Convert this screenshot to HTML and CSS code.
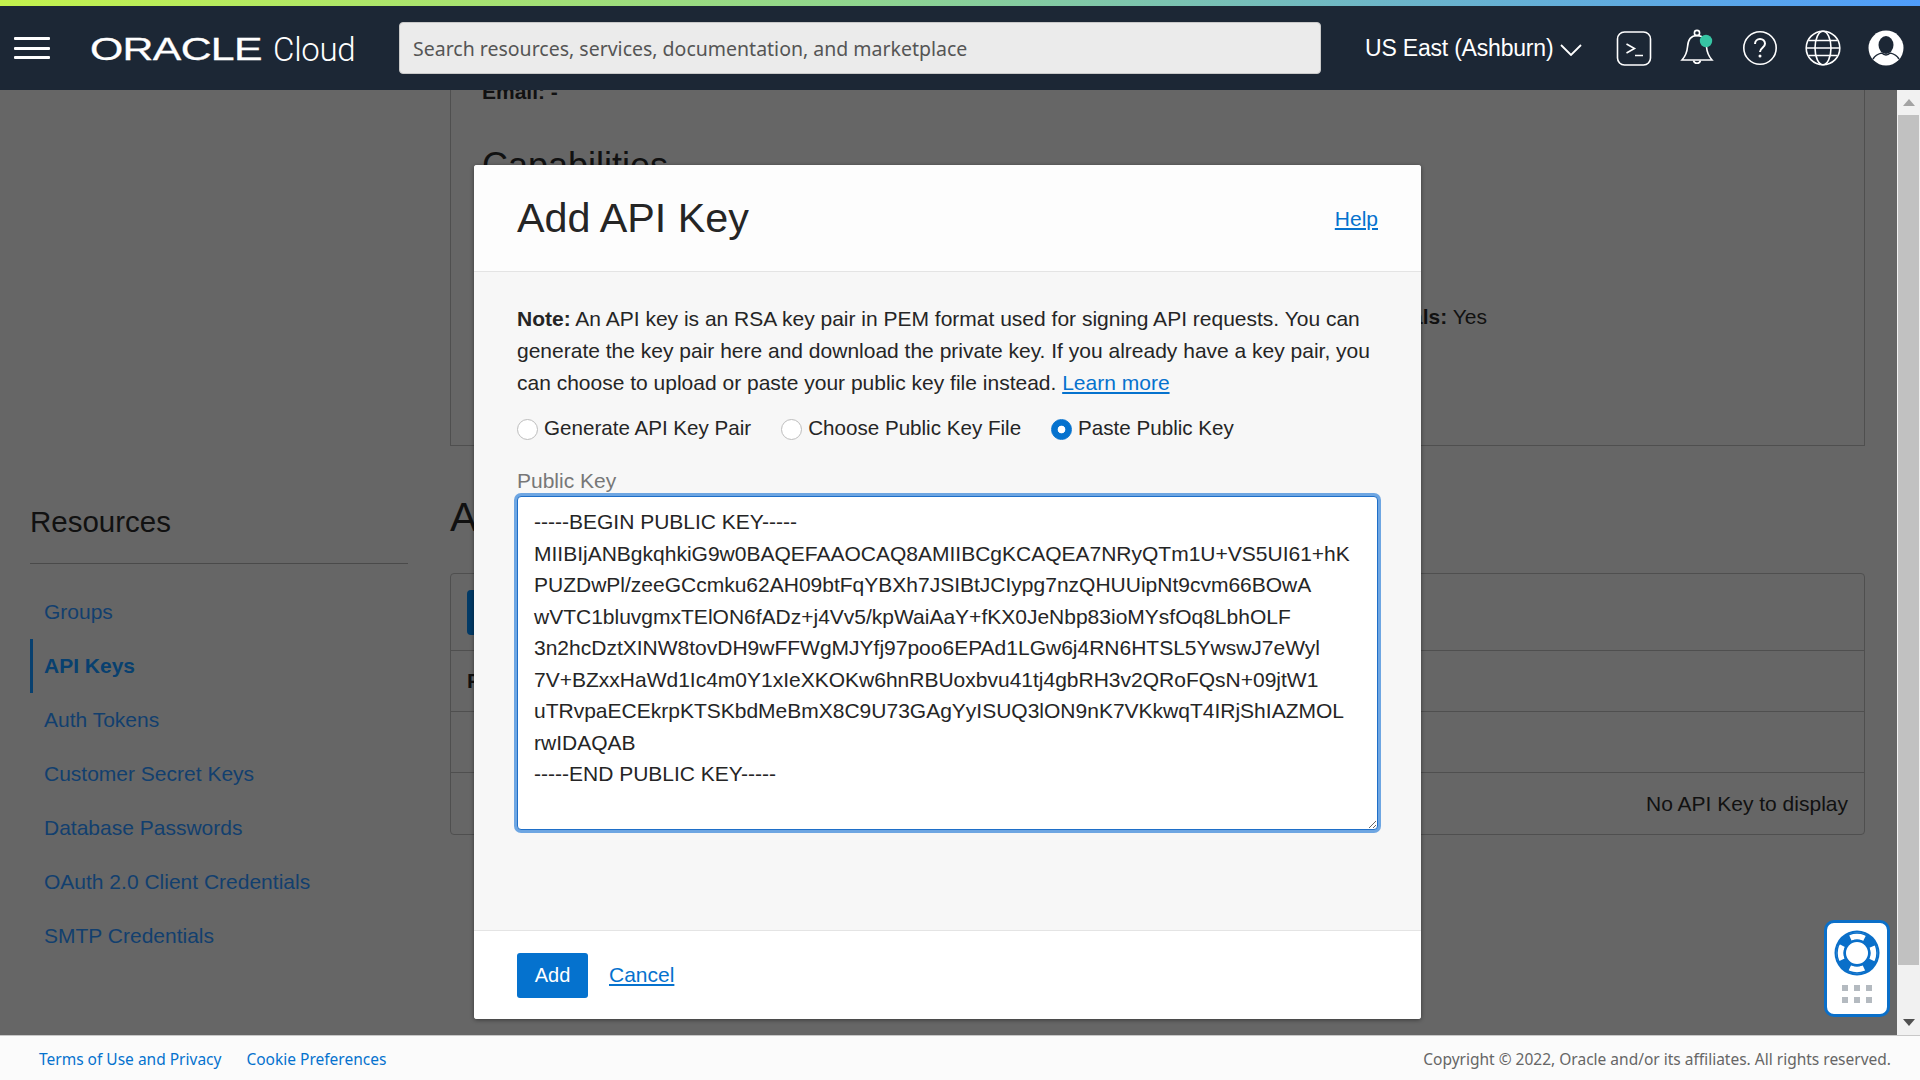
FILE: index.html
```html
<!DOCTYPE html>
<html lang="en">
<head>
<meta charset="utf-8">
<title>Add API Key</title>
<link rel="stylesheet" href="styles.css">
</head>
<body>
<div class="accent"></div>
<header class="header">
  <button class="burger" aria-label="Menu"><span></span><span></span><span></span></button>
  <div class="brand"><span class="oracle">ORACLE</span><span class="cloud">Cloud</span></div>
  <div class="search">Search resources, services, documentation, and marketplace</div>
  <div class="region">US East (Ashburn)
    <svg class="chev" width="22" height="12" viewBox="0 0 22 12"><path d="M1 1l10 10L21 1" fill="none" stroke="#fff" stroke-width="1.8"/></svg>
  </div>
  <div class="icons">
    <svg width="36" height="36" viewBox="0 0 36 36" fill="none" stroke="#fff" stroke-width="1.6"><rect x="1.5" y="2" width="33" height="33" rx="7"/><path d="M10.500 14l8 4.500-8 4.500M19 25.500h8"/></svg>
    <svg width="36" height="38" viewBox="0 0 36 38" fill="none" stroke="#fff" stroke-width="1.6"><circle cx="18" cy="4" r="2.6"/><path d="M3 31h30c-3.500-4-5-7-5.500-13C27 10 23 6.500 18 6.500S9 10 8.500 18C8 24 6.500 27 3 31z"/><path d="M14.500 31.500a3.600 3.600 0 0 0 7 0"/><circle cx="27" cy="12" r="6.200" fill="#36c5a4" stroke="none"/></svg>
    <svg width="36" height="36" viewBox="0 0 36 36" fill="none" stroke="#fff" stroke-width="1.6"><circle cx="18" cy="18" r="16.200"/><path d="M13 14c0-3 2.200-5 5-5s5 2 5 4.800c0 4-5 4-5 8.200" stroke-width="2"/><circle cx="18" cy="26" r="1.500" fill="#fff" stroke="none"/></svg>
    <svg width="36" height="36" viewBox="0 0 36 36" fill="none" stroke="#fff" stroke-width="1.6"><circle cx="18" cy="18" r="16.800"/><ellipse cx="18" cy="18" rx="8" ry="16.800"/><path d="M4 10.500h28M1.500 18h33M4 25.500h28"/></svg>
    <svg width="36" height="36" viewBox="0 0 36 36"><circle cx="18" cy="18" r="17.500" fill="#fff"/><ellipse cx="18" cy="15" rx="7.500" ry="9" fill="#1c2735"/><path d="M5 29c3-5 7-5.500 9-6M31 29c-3-5-7-5.500-9-6M14 23c2 2.500 6 2.500 8 0" fill="none" stroke="#1c2735" stroke-width="1.500"/></svg>
  </div>
</header>

<div class="workspace">
  <main class="viewport">
    <div class="page">
      <section class="details">
        <p class="email">Email: -</p>
        <h2 class="cap-title">Capabilities</h2>
        <p class="cap-row"><b>OAuth 2.0 Client Credentials:</b> Yes</p>
      </section>
      <div class="lower">
        <nav class="sidebar">
          <h3 class="res-title">Resources</h3>
          <ul class="res-list">
            <li><a>Groups</a></li>
            <li class="active"><a>API Keys</a></li>
            <li><a>Auth Tokens</a></li>
            <li><a>Customer Secret Keys</a></li>
            <li><a>Database Passwords</a></li>
            <li><a>OAuth 2.0 Client Credentials</a></li>
            <li><a>SMTP Credentials</a></li>
          </ul>
        </nav>
        <section class="keys">
          <h2 class="keys-title">API Keys</h2>
          <div class="table">
            <div class="tr tr-actions"><span class="dark-btn">Add API Key</span></div>
            <div class="tr tr-head"><b>Fingerprint</b></div>
            <div class="tr tr-blank"></div>
            <div class="tr tr-empty">No API Key to display</div>
          </div>
        </section>
      </div>
    </div>
  </main>
  <div class="scrollbar">
    <span class="arrow up"></span>
    <span class="thumb"></span>
    <span class="arrow down"></span>
  </div>

  <div class="modal">
    <div class="modal-head">
      <h1>Add API Key</h1>
      <a class="link">Help</a>
    </div>
    <div class="modal-body">
      <p class="note"><b>Note:</b> An API key is an RSA key pair in PEM format used for signing API requests. You can generate the key pair here and download the private key. If you already have a key pair, you can choose to upload or paste your public key file instead. <a class="link">Learn more</a></p>
      <div class="radios">
        <label class="radio"><input type="radio" name="k">Generate API Key Pair</label>
        <label class="radio"><input type="radio" name="k">Choose Public Key File</label>
        <label class="radio"><input type="radio" name="k" checked>Paste Public Key</label>
      </div>
      <label class="field-label" for="pk">Public Key</label>
      <textarea id="pk" class="keybox" wrap="off" spellcheck="false">-----BEGIN PUBLIC KEY-----
MIIBIjANBgkqhkiG9w0BAQEFAAOCAQ8AMIIBCgKCAQEA7NRyQTm1U+VS5UI61+hK
PUZDwPl/zeeGCcmku62AH09btFqYBXh7JSIBtJCIypg7nzQHUUipNt9cvm66BOwA
wVTC1bluvgmxTElON6fADz+j4Vv5/kpWaiAaY+fKX0JeNbp83ioMYsfOq8LbhOLF
3n2hcDztXINW8tovDH9wFFWgMJYfj97poo6EPAd1LGw6j4RN6HTSL5YwswJ7eWyl
7V+BZxxHaWd1Ic4m0Y1xIeXKOKw6hnRBUoxbvu41tj4gbRH3v2QRoFQsN+09jtW1
uTRvpaECEkrpKTSKbdMeBmX8C9U73GAgYyISUQ3lON9nK7VKkwqT4IRjShIAZMOL
rwIDAQAB
-----END PUBLIC KEY-----</textarea>
    </div>
    <div class="modal-foot">
      <button class="primary">Add</button>
      <a class="link">Cancel</a>
    </div>
  </div>

  <div class="help-widget">
    <svg width="46" height="46" viewBox="0 0 46 46"><circle cx="23" cy="23" r="22.500" fill="#0a6fc9"/><circle cx="23" cy="23" r="11" fill="#fff"/><circle cx="23" cy="23" r="17" fill="none" stroke="#fff" stroke-width="7" stroke-dasharray="15 11.700" stroke-dashoffset="7.500"/><circle cx="23" cy="23" r="12.500" fill="none" stroke="#0a6fc9" stroke-width="2"/><circle cx="23" cy="23" r="20" fill="none" stroke="#0a6fc9" stroke-width="1.500"/></svg>
    <div class="dots"><i></i><i></i><i></i><i></i><i></i><i></i></div>
  </div>
</div>

<footer class="footer">
  <div class="foot-links"><a>Terms of Use and Privacy</a><a>Cookie Preferences</a></div>
  <div class="copyright">Copyright © 2022, Oracle and/or its affiliates. All rights reserved.</div>
</footer>
</body>
</html>
```
FILE: styles.css
```css
* { box-sizing: border-box; }
html, body { height: 100%; }
body {
  margin: 0;
  display: flex;
  flex-direction: column;
  height: 100vh;
  overflow: hidden;
  font-family: "Liberation Sans", Arial, sans-serif;
  font-size: 21px;
  color: #252525;
  background: #666;
}
p, h1, h2, h3, ul { margin: 0; padding: 0; font-weight: 400; }
ul { list-style: none; }

.accent {
  height: 6px;
  flex: none;
  background: linear-gradient(90deg, #c3f24d 0%, #8fd58f 45%, #6db6c8 72%, #4f9dfb 100%);
}
.header {
  height: 84px;
  flex: none;
  background: #1c2735;
  display: flex;
  align-items: center;
  color: #fff;
}
.burger {
  width: 36px;
  height: 22px;
  margin-left: 14px;
  padding: 0;
  background: none;
  border: 0;
  display: flex;
  flex-direction: column;
  justify-content: space-between;
}
.burger span { display: block; height: 3px; background: #fff; border-radius: 1px; }
.brand { width: 309px; margin-left: 40px; display: flex; align-items: center; height: 40px; margin-top: 3px; }
.oracle {
  display: inline-block;
  font-family: "Liberation Sans", sans-serif;
  font-size: 31px;
  line-height: 30px;
  letter-spacing: -0.5px;
  transform: scaleX(1.38);
  transform-origin: left center;
  width: 183px;
  -webkit-text-stroke: 0.3px #fff;
}
.cloud { font-family: Roboto, sans-serif; font-weight: 300; font-size: 33px; line-height: 40px; letter-spacing: -0.3px; }
.search {
  width: 922px;
  height: 52px;
  padding: 0 13px;
  display: flex;
  align-items: center;
  background: #ebebeb;
  border-radius: 4px;
  border: 1px solid #c9c9c9;
  color: #555;
  font-family: "Noto Sans", sans-serif;
  font-size: 19.500px;
  white-space: nowrap;
}
.region {
  margin-left: 44px;
  width: 252px;
  display: flex;
  align-items: center;
  gap: 7px;
  font-size: 23px;
  white-space: nowrap;
  letter-spacing: -0.2px;
}
.chev { margin-top: 4px; }
.icons { display: flex; align-items: center; gap: 27px; margin-left: -1px; }

.workspace { flex: 1; display: flex; position: relative; min-height: 0; }
.viewport { flex: 1; min-width: 0; overflow: hidden; background: #666; }
.page { padding: 0 32px 0 30px; }
.scrollbar {
  width: 23px;
  flex: none;
  background: #f1f1f1;
  display: flex;
  flex-direction: column;
  align-items: center;
  padding: 9px 0 9px;
}
.thumb { flex: 1; width: 21px; background: #c1c1c1; margin: 9px 0 54px; }
.arrow { width: 0; height: 0; border-left: 6px solid transparent; border-right: 6px solid transparent; }
.arrow.up { border-bottom: 7px solid #a3a3a3; }
.arrow.down { border-top: 7px solid #505050; }

.details {
  margin-left: 420px;
  height: 365px;
  border: 1px solid #4f4f4f;
  border-top: 0;
  padding: 0 0 0 31px;
}
.email { font-weight: 700; margin-top: -9px; line-height: 22px; color: #111; }
.cap-title { font-size: 36px; line-height: 40px; margin-top: 43px; color: #111; }
.cap-row { margin-top: 119px; padding-right: 377px; text-align: right; white-space: nowrap; color: #111; }
.cap-row b { font-weight: 700; }

.lower { display: flex; }
.sidebar { width: 378px; margin-right: 42px; flex: none; padding-top: 57px; }
.res-title { font-size: 29.500px; line-height: 38px; color: #111; padding-bottom: 22px; border-bottom: 1px solid #4a4a4a; }
.res-list { margin-top: 21px; }
.res-list li { height: 54px; display: flex; align-items: center; padding-left: 14px; color: #123f6e; }
.res-list li.active { border-left: 3px solid #08406f; padding-left: 11px; font-weight: 700; color: #08406f; }

.keys { flex: 1; min-width: 0; padding-top: 47px; }
.keys-title { font-size: 41px; line-height: 48px; color: #111; }
.table { margin-top: 32px; height: 262px; border: 1px solid #4f4f4f; border-radius: 4px; }
.tr { border-bottom: 1px solid #4f4f4f; display: flex; align-items: center; padding: 0 16px; color: #111; }
.tr:last-child { border-bottom: 0; }
.tr-actions { height: 77px; }
.tr-head { height: 61px; }
.tr-blank { height: 61px; }
.tr-empty { height: 61px; justify-content: flex-end; }
.dark-btn { height: 45px; display: flex; align-items: center; padding: 0 16px; background: #023a66; border-radius: 4px; color: #888; }

.modal {
  position: absolute;
  left: 474px;
  top: 75px;
  width: 947px;
  height: 854px;
  background: #f7f7f7;
  border-radius: 3px;
  box-shadow: 0 1px 4px rgba(0, 0, 0, .45);
  display: flex;
  flex-direction: column;
  z-index: 2;
}
.modal-head {
  height: 107px;
  flex: none;
  padding: 0 43px;
  background: #fdfdfd;
  border-bottom: 1px solid #e4e4e4;
  border-radius: 3px 3px 0 0;
  display: flex;
  align-items: center;
  justify-content: space-between;
}
.modal-head h1 { font-size: 41.300px; line-height: 50px; color: #252525; }
.modal-head .link { margin-top: 2px; }
.link { color: #0572ce; text-decoration: underline; }
.modal-body { flex: 1; padding: 31px 43px 0; }
.note { line-height: 31.800px; }
.radios { display: flex; gap: 30px; margin-top: 15px; height: 30px; align-items: center; font-size: 20.600px; }
.radio { display: flex; align-items: center; white-space: nowrap; }
.radio input {
  appearance: none;
  width: 21px;
  height: 21px;
  margin: 2px 6px 0 0;
  background: #fff;
  border: 1px solid #bdbdbd;
  border-radius: 50%;
}
.radio input:checked { background: radial-gradient(circle, #fff 0 3.500px, #0572ce 4.200px); border-color: #0572ce; }
.field-label { display: block; margin-top: 25px; line-height: 26px; color: #777; }
.keybox {
  display: block;
  width: 861px;
  height: 334px;
  margin: 2px 0 0;
  padding: 9px 16px;
  border: 1px solid #1f6fc8;
  border-radius: 4px;
  box-shadow: 0 0 0 3px #6ea6e2;
  outline: 0;
  background: #fff;
  color: #252525;
  font-family: "Liberation Sans", Arial, sans-serif;
  font-size: 21px;
  line-height: 31.500px;
  overflow: hidden;
  resize: vertical;
}
.modal-foot {
  height: 89px;
  flex: none;
  padding: 0 43px;
  background: #fff;
  border-top: 1px solid #e4e4e4;
  border-radius: 0 0 3px 3px;
  display: flex;
  align-items: center;
  gap: 21px;
}
.primary {
  width: 71px;
  height: 45px;
  background: #0572ce;
  color: #fff;
  border: 0;
  border-radius: 3px;
  font-family: "Liberation Sans", Arial, sans-serif;
  font-size: 20px;
  margin-top: 1px;
}

.help-widget {
  position: absolute;
  left: 1824px;
  top: 830px;
  width: 66px;
  height: 97px;
  background: #fff;
  border: 3px solid #0a6fc9;
  border-radius: 10px;
  display: flex;
  flex-direction: column;
  align-items: center;
  padding-top: 7px;
  z-index: 3;
}
.dots { display: grid; grid-template-columns: repeat(3, 6px); gap: 6px; margin-top: 9px; }
.dots i { width: 6px; height: 6px; background: #b4bac0; }

.footer {
  height: 45px;
  flex: none;
  background: #fbfbfb;
  border-top: 1px solid #c8c8c8;
  padding: 2px 29px 0 39px;
  display: flex;
  align-items: center;
  justify-content: space-between;
  font-family: "Noto Sans", sans-serif;
  font-size: 15.500px;
  color: #666;
}
.foot-links { display: flex; gap: 25px; color: #0572ce; }
```
